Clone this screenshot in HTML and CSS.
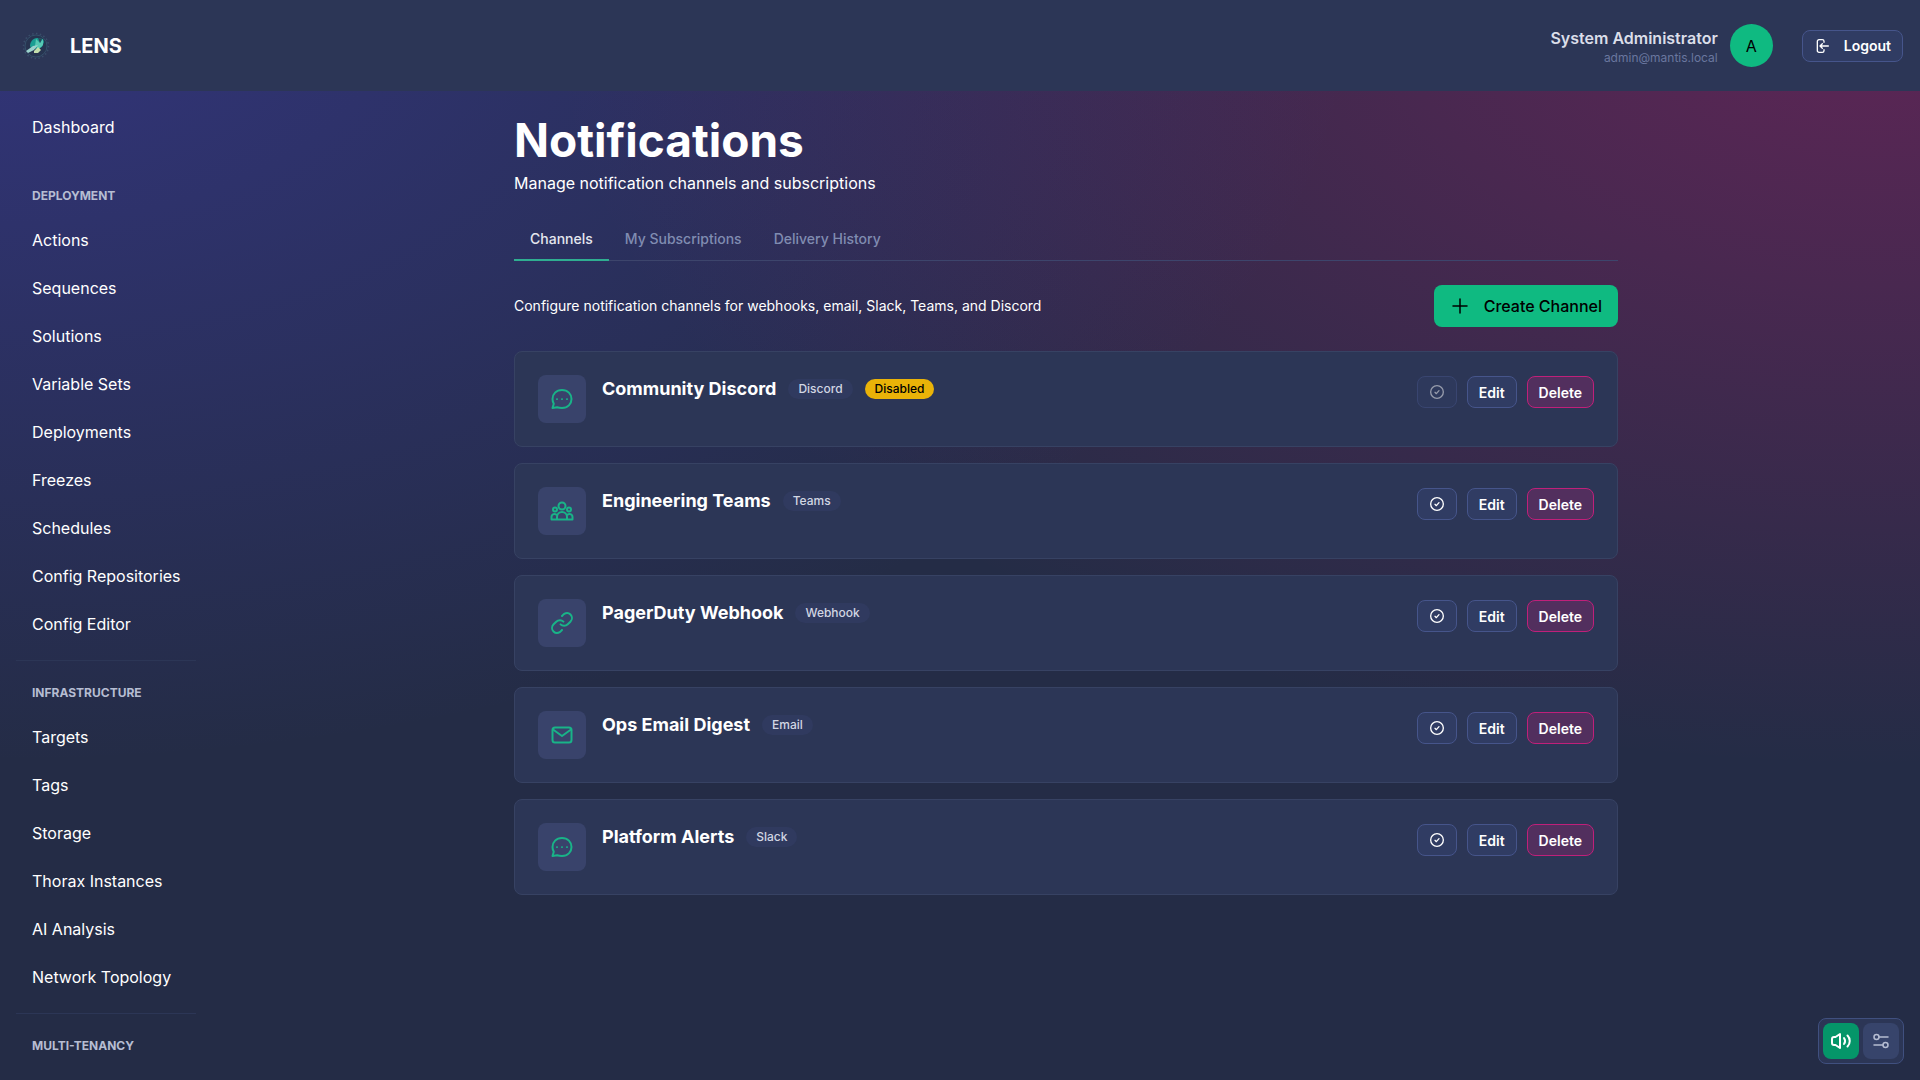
FILE: index.html
```html
<!DOCTYPE html>
<html lang="en">
<head>
  <meta charset="UTF-8">
  <meta name="viewport" content="width=device-width, initial-scale=1">
  <title>Notifications - LENS</title>
  <link rel="stylesheet" href="styles.css">
</head>
<body>
<!-- shared icons -->
<svg class="sprite" aria-hidden="true">
  <symbol id="chat" viewBox="0 0 24 24">
    <path d="M17 12.5a.5.5 0 1 0 0-1 .5.5 0 0 0 0 1ZM12 12.5a.5.5 0 1 0 0-1 .5.5 0 0 0 0 1ZM7 12.5a.5.5 0 1 0 0-1 .5.5 0 0 0 0 1Z" stroke-width="1"/>
    <path d="M12 21c5.800 0 9.500-4 9.500-9S17.800 3 12 3 2.500 7 2.500 12c0 1.800.500 3.400 1.300 4.800L2.500 21l4.600-.7c1.500.5 3.100.7 4.900.7Z"/>
  </symbol>
  <symbol id="community" viewBox="0 0 24 24">
    <path d="M7 20.500v-2.500a5 5 0 0 1 10 0v2.500M1.500 20.500v-2.500a3 3 0 0 1 5.500-1.700M22.500 20.500v-2.500a3 3 0 0 0-5.500-1.700M1.500 20.500h21"/>
    <circle cx="12" cy="7" r="3.500"/>
    <circle cx="5" cy="10.500" r="2"/>
    <circle cx="19" cy="10.500" r="2"/>
  </symbol>
  <symbol id="link" viewBox="0 0 24 24">
    <path d="M14 11.998C14 9.506 11.683 7 8.857 7H5.143C2.303 7 0 9.238 0 11.998c0 2.378 1.710 4.368 4 4.873a5.300 5.300 0 0 0 1.143.124H7M10 11.998c0 2.491 2.317 4.997 5.143 4.997h3.714c2.840 0 5.143-2.237 5.143-4.997 0-2.379-1.710-4.370-4-4.874A5.304 5.304 0 0 0 18.857 7H17" transform="rotate(-45 12 12)"/>
  </symbol>
  <symbol id="mail" viewBox="0 0 24 24">
    <path d="m3 6.500 9 6.500 9-6.500"/>
    <rect x="2.500" y="4.500" width="19" height="15" rx="2.500"/>
  </symbol>
  <symbol id="check" viewBox="0 0 24 24">
    <path d="m9 12.500 2 2 4-4.500"/>
    <circle cx="12" cy="12" r="9.500"/>
  </symbol>
</svg>

<header class="app-bar">
  <a class="brand" href="#">
    <svg class="logo" viewBox="0 0 28 28" aria-hidden="true">
      <circle cx="14" cy="14" r="11" fill="#273450" stroke="#34506a" stroke-width="1"/>
      <circle cx="14" cy="14" r="12.500" fill="none" stroke="#3a4e6a" stroke-width="1.500" stroke-dasharray="1.500 2.400"/>
      <path d="M8 14c0-4 3-8 7-8l6 1 1 3-2 5-5 2-6-1Z" fill="#1a9e93"/>
      <path d="M14 7l4 4 3-4 0 6-4 4-4-3Z" fill="#57c9b4"/>
      <path d="M16 6l2 5 2-4Z" fill="#27465a"/>
      <path d="M4 19l7-5 5-1-4 5-6 3Z" fill="#9bd2cc"/>
      <path d="M12 19l4-4 3 3-3 3-4 0Z" fill="#c4dfac"/>
    </svg>
    <strong>LENS</strong>
  </a>
  <div class="account">
    <div class="user">
      <span class="user-name">System Administrator</span>
      <span class="user-mail">admin@mantis.local</span>
    </div>
    <span class="avatar">A</span>
    <button class="btn btn-logout" type="button">
      <svg class="icon icon-sm" viewBox="0 0 24 24" aria-hidden="true"><path d="M21.500 12H9m0 0 3.500-3.500M9 12l3.500 3.500M15 6.500V5a2.500 2.500 0 0 0-2.500-2.500h-5A2.500 2.500 0 0 0 5 5v14a2.500 2.500 0 0 0 2.500 2.500h5A2.500 2.500 0 0 0 15 19v-1.500"/></svg>
      Logout
    </button>
  </div>
</header>

<div class="layout">
  <nav class="sidebar">
    <a href="#">Dashboard</a>
    <section class="nav-group nav-group-first">
      <h2>Deployment</h2>
      <a href="#">Actions</a>
      <a href="#">Sequences</a>
      <a href="#">Solutions</a>
      <a href="#">Variable Sets</a>
      <a href="#">Deployments</a>
      <a href="#">Freezes</a>
      <a href="#">Schedules</a>
      <a href="#">Config Repositories</a>
      <a href="#">Config Editor</a>
    </section>
    <section class="nav-group">
      <h2>Infrastructure</h2>
      <a href="#">Targets</a>
      <a href="#">Tags</a>
      <a href="#">Storage</a>
      <a href="#">Thorax Instances</a>
      <a href="#">AI Analysis</a>
      <a href="#">Network Topology</a>
    </section>
    <section class="nav-group">
      <h2>Multi-Tenancy</h2>
    </section>
  </nav>

  <main class="page">
    <div class="container">
      <h1>Notifications</h1>
      <p class="subtitle">Manage notification channels and subscriptions</p>

      <div class="tabs" role="tablist">
        <button class="tab active" type="button" role="tab" aria-selected="true">Channels</button>
        <button class="tab" type="button" role="tab" aria-selected="false">My Subscriptions</button>
        <button class="tab" type="button" role="tab" aria-selected="false">Delivery History</button>
      </div>

      <div class="toolbar">
        <p>Configure notification channels for webhooks, email, Slack, Teams, and Discord</p>
        <button class="btn-create" type="button">
          <svg class="icon" viewBox="0 0 20 20" aria-hidden="true"><path d="M3 10h14M10 3v14"/></svg>
          Create Channel
        </button>
      </div>

      <div class="channels">
        <article class="card">
          <div class="card-icon"><svg class="icon icon-lg"><use href="#chat"/></svg></div>
          <div class="card-title">
            <h3>Community Discord</h3>
            <span class="badge">Discord</span>
            <span class="badge badge-warning">Disabled</span>
          </div>
          <div class="actions">
            <button class="btn btn-icon" type="button" aria-label="Test" disabled><svg class="icon icon-sm"><use href="#check"/></svg></button>
            <button class="btn" type="button">Edit</button>
            <button class="btn btn-delete" type="button">Delete</button>
          </div>
        </article>
        <article class="card">
          <div class="card-icon"><svg class="icon icon-lg"><use href="#community"/></svg></div>
          <div class="card-title">
            <h3>Engineering Teams</h3>
            <span class="badge">Teams</span>
          </div>
          <div class="actions">
            <button class="btn btn-icon" type="button" aria-label="Test"><svg class="icon icon-sm"><use href="#check"/></svg></button>
            <button class="btn" type="button">Edit</button>
            <button class="btn btn-delete" type="button">Delete</button>
          </div>
        </article>
        <article class="card">
          <div class="card-icon"><svg class="icon icon-lg"><use href="#link"/></svg></div>
          <div class="card-title">
            <h3>PagerDuty Webhook</h3>
            <span class="badge">Webhook</span>
          </div>
          <div class="actions">
            <button class="btn btn-icon" type="button" aria-label="Test"><svg class="icon icon-sm"><use href="#check"/></svg></button>
            <button class="btn" type="button">Edit</button>
            <button class="btn btn-delete" type="button">Delete</button>
          </div>
        </article>
        <article class="card">
          <div class="card-icon"><svg class="icon icon-lg"><use href="#mail"/></svg></div>
          <div class="card-title">
            <h3>Ops Email Digest</h3>
            <span class="badge">Email</span>
          </div>
          <div class="actions">
            <button class="btn btn-icon" type="button" aria-label="Test"><svg class="icon icon-sm"><use href="#check"/></svg></button>
            <button class="btn" type="button">Edit</button>
            <button class="btn btn-delete" type="button">Delete</button>
          </div>
        </article>
        <article class="card">
          <div class="card-icon"><svg class="icon icon-lg"><use href="#chat"/></svg></div>
          <div class="card-title">
            <h3>Platform Alerts</h3>
            <span class="badge">Slack</span>
          </div>
          <div class="actions">
            <button class="btn btn-icon" type="button" aria-label="Test"><svg class="icon icon-sm"><use href="#check"/></svg></button>
            <button class="btn" type="button">Edit</button>
            <button class="btn btn-delete" type="button">Delete</button>
          </div>
        </article>
      </div>
    </div>
  </main>
</div>

<div class="quick-controls">
  <button class="sound-on" type="button" aria-label="Sound">
    <svg class="icon icon-lg" viewBox="0 0 24 24" aria-hidden="true"><path d="M3 14v-4a2 2 0 0 1 2-2h1.500L11 5v14l-4.500-3H5a2 2 0 0 1-2-2ZM15 9c1.300 1.800 1.300 4.200 0 6M18.500 6.500c3 3 3 8 0 11"/></svg>
  </button>
  <button type="button" aria-label="Sound settings">
    <svg class="icon" viewBox="0 0 20 20" aria-hidden="true"><path d="M8 6h9M3 14h9"/><circle cx="5.500" cy="6" r="2.500"/><circle cx="14.500" cy="14" r="2.500"/></svg>
  </button>
</div>
</body>
</html>
```
FILE: styles.css
```css
* {
  box-sizing: border-box;
}

body {
  margin: 0;
  height: 100vh;
  display: flex;
  flex-direction: column;
  overflow: hidden;
  font-family: Inter, sans-serif;
  font-size: 16px;
  line-height: 24px;
  color: #fff;
  background-color: #242c46;
  background-image:
    radial-gradient(at 0% 0%, rgba(79, 70, 229, 0.33) 0px, transparent 50%),
    radial-gradient(at 98% 1%, rgba(212, 25, 118, 0.33) 0px, transparent 50%);
}

h1, h2, h3, p {
  margin: 0;
}

a {
  color: inherit;
  text-decoration: none;
}

button {
  font-family: inherit;
  color: inherit;
  cursor: pointer;
}

.sprite {
  display: none;
}

.icon {
  width: 20px;
  height: 20px;
  flex: none;
  fill: none;
  stroke: currentColor;
  stroke-width: 1.5;
  stroke-linecap: round;
  stroke-linejoin: round;
}

.icon-sm {
  width: 16px;
  height: 16px;
  stroke-width: 2;
}

.icon-lg {
  width: 24px;
  height: 24px;
  stroke-width: 2;
}

/* header */
.app-bar {
  flex: none;
  display: flex;
  align-items: center;
  justify-content: space-between;
  height: 91px;
  padding: 0 17px 0 22px;
  background: #2c3656;
}

.brand {
  display: flex;
  align-items: center;
  gap: 20px;
  font-size: 20px;
}

.logo {
  width: 28px;
  height: 28px;
}

.account {
  display: flex;
  align-items: center;
}

.user {
  display: flex;
  flex-direction: column;
  text-align: right;
  margin-right: 12px;
}

.user-name {
  font-weight: 600;
  color: #dbdee9;
}

.user-mail {
  font-size: 12px;
  line-height: 16px;
  color: #6a779f;
}

.avatar {
  display: flex;
  align-items: center;
  justify-content: center;
  width: 43px;
  height: 43px;
  margin-right: 29px;
  border-radius: 50%;
  background: #0fba81;
  color: #000;
}

/* buttons */
.btn {
  display: flex;
  align-items: center;
  height: 32px;
  padding: 0 11px;
  border: 1px solid #46558b;
  border-radius: 8px;
  background: #303c63;
  font-size: 14px;
  font-weight: 600;
}

.btn-logout {
  gap: 14px;
  padding: 0 11px;
}

.btn-icon {
  width: 40px;
  justify-content: center;
  padding: 0;
}

.btn-delete {
  border-color: #c0207a;
  background: #522f5e;
}

.btn:disabled {
  opacity: 0.5;
}

.btn-create {
  display: flex;
  align-items: center;
  gap: 14px;
  height: 42px;
  padding: 0 16px;
  border: 0;
  border-radius: 8px;
  background: #0fba81;
  color: #000;
  font-size: 16px;
  font-weight: 500;
}

/* sidebar */
.layout {
  flex: 1;
  min-height: 0;
  display: flex;
}

.sidebar {
  width: 212px;
  flex: none;
  overflow: hidden;
  padding: 12px 16px;
}

.sidebar a {
  display: block;
  padding: 12px 16px;
  white-space: nowrap;
}

.nav-group {
  margin-top: 12px;
  padding-top: 24px;
  border-top: 1px solid #2c3656;
}

.nav-group-first {
  border-color: transparent;
}

.nav-group h2 {
  margin-bottom: 12px;
  padding: 0 16px;
  font-size: 12px;
  line-height: 16px;
  font-weight: 700;
  text-transform: uppercase;
  color: #b6bdd2;
}

/* page */
.page {
  flex: 1;
  min-width: 0;
  overflow: hidden;
  padding: 24px;
}

.container {
  max-width: 1104px;
  margin: 0 auto;
}

h1 {
  font-size: 46px;
  line-height: 50px;
  font-weight: 700;
}

.subtitle {
  margin-top: 6px;
}

.tabs {
  display: flex;
  margin-top: 24px;
  border-bottom: 1px solid #3d456c;
}

.tab {
  padding: 9px 16px;
  margin-bottom: -1px;
  border: 0;
  border-bottom: 2px solid transparent;
  background: none;
  font-size: 14px;
  line-height: 22px;
  font-weight: 500;
  color: #808cb1;
}

.tab.active {
  border-color: #2fae91;
  color: #e4e6ee;
}

.toolbar {
  display: flex;
  align-items: center;
  justify-content: space-between;
  margin: 24px 0;
  font-size: 14px;
}

.channels {
  display: grid;
  gap: 16px;
}

.card {
  display: flex;
  align-items: flex-start;
  gap: 16px;
  padding: 23px;
  border: 1px solid #374263;
  border-radius: 8px;
  background: #2c3656;
}

.card-icon {
  display: flex;
  align-items: center;
  justify-content: center;
  width: 48px;
  height: 48px;
  border-radius: 8px;
  background: #39436b;
  color: #19b488;
}

.card-title {
  flex: 1;
  display: flex;
  align-items: center;
  gap: 12px;
}

h3 {
  font-size: 18px;
  line-height: 28px;
  font-weight: 700;
}

.badge {
  padding: 2px 10px;
  border-radius: 10px;
  background: #303a5f;
  color: #d2d6e3;
  font-size: 12px;
  line-height: 16px;
  font-weight: 500;
}

.badge-warning {
  background: #eab308;
  color: #000;
}

.actions {
  display: flex;
  gap: 10px;
  padding-top: 1px;
}

/* floating sound controls */
.quick-controls {
  position: fixed;
  right: 16px;
  bottom: 16px;
  display: flex;
  gap: 4px;
  padding: 4px;
  border: 1px solid #40507f;
  border-radius: 8px;
  background: #2c3656;
}

.quick-controls button {
  display: flex;
  align-items: center;
  justify-content: center;
  width: 36px;
  height: 36px;
  padding: 0;
  border: 0;
  border-radius: 8px;
  background: #37446b;
  color: #b6bdd2;
}

.quick-controls .sound-on {
  background: #059669;
  color: #fff;
}
```
